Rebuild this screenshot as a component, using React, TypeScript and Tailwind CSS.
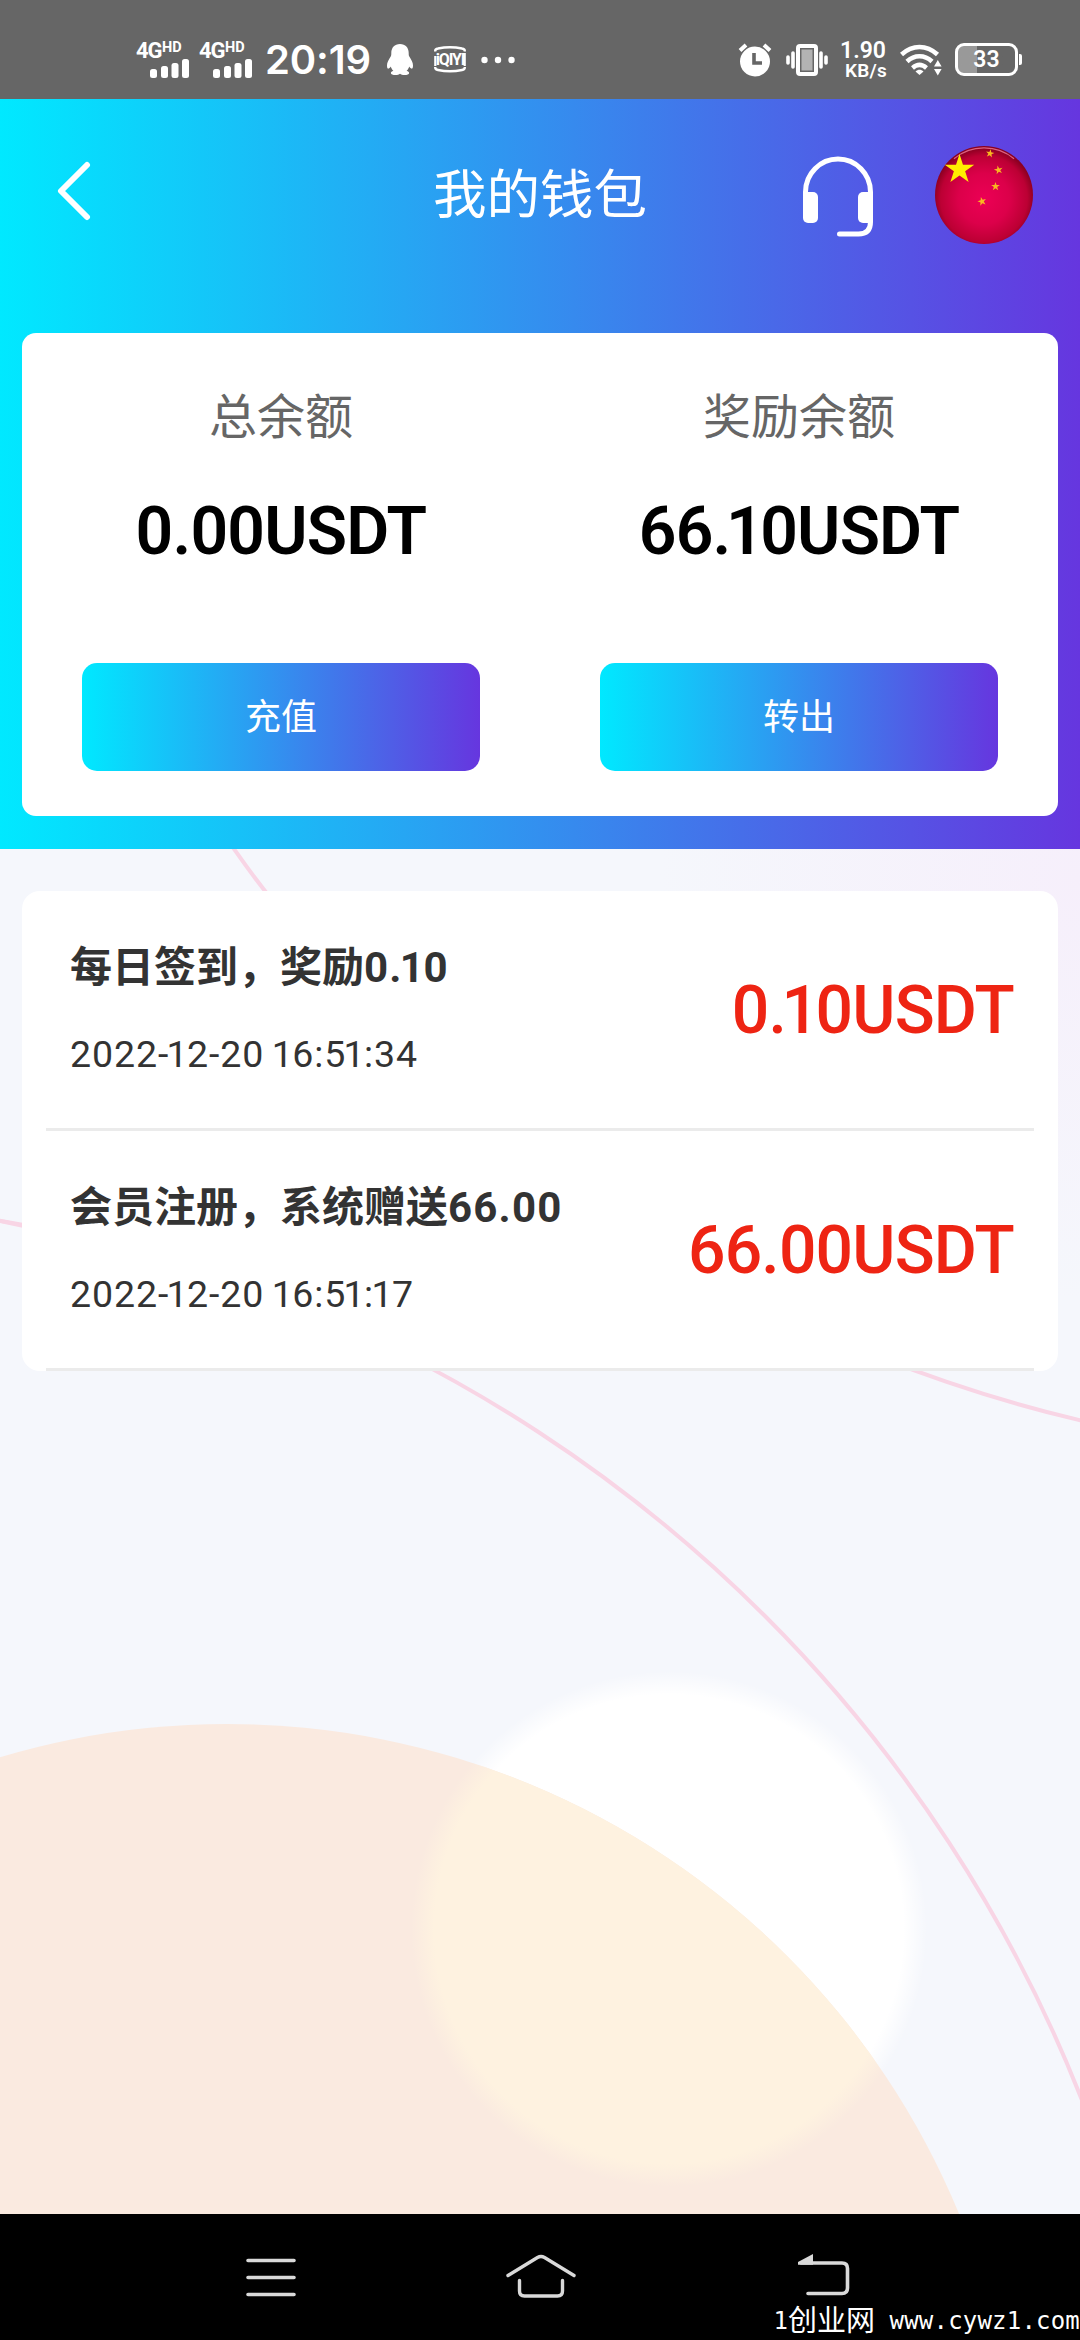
import React from "react";

function Backdrop() {
  return (
    <svg className="absolute inset-0 h-full w-full" viewBox="0 0 1080 1365" fill="none">
      <defs>
        <radialGradient id="glow" cx="1080" cy="30" r="420" gradientUnits="userSpaceOnUse">
          <stop offset="0" stopColor="#f6effb" />
          <stop offset="1" stopColor="#f5f7fc" />
        </radialGradient>
        <radialGradient id="moon" cx="669" cy="1080" r="258" gradientUnits="userSpaceOnUse">
          <stop offset="0.91" stopColor="#ffffff" />
          <stop offset="1" stopColor="#ffffff" stopOpacity="0" />
        </radialGradient>
        <radialGradient id="cream" cx="669" cy="1080" r="258" gradientUnits="userSpaceOnUse">
          <stop offset="0.91" stopColor="#fef2e0" />
          <stop offset="1" stopColor="#fef2e0" stopOpacity="0" />
        </radialGradient>
        <clipPath id="hill">
          <circle cx="227" cy="1667" r="792" />
        </clipPath>
      </defs>
      <rect width="1080" height="1365" fill="url(#glow)" />
      <g stroke="#f8d5e5" strokeWidth="4">
        <circle cx="1408" cy="-827" r="1436" />
        <circle cx="-237" cy="1769" r="1417" />
        <path d="M0 372 L24 377" />
      </g>
      <circle cx="669" cy="1080" r="258" fill="url(#moon)" />
      <circle cx="227" cy="1667" r="792" fill="#faeae0" />
      <circle cx="669" cy="1080" r="258" fill="url(#cream)" clipPath="url(#hill)" />
    </svg>
  );
}

/* Sets numerals proportionally: the figure 1 takes less room than the others. */
function Figures({ text }: { text: string }) {
  return (
    <>
      {text.split(/(1)/).map((part, i) =>
        part === "1" ? (
          <span key={i} className="-mr-[0.04em] -ml-[0.07em]">
            1
          </span>
        ) : (
          part
        ),
      )}
    </>
  );
}

function Signal() {
  return (
    <div className="h-[36px] w-[63px] shrink-0">
      <div className="flex h-[17px] items-start leading-none">
        <span className="w-[26px] text-[22px] leading-[18px] font-bold tracking-[-1px]">4G</span>
        <span className="text-[14.500px] leading-[12px] font-bold">HD</span>
      </div>
      <svg className="ml-[14px]" width="40" height="19" viewBox="0 0 40 19" fill="#fff">
        <rect x="0" y="10" width="7" height="9" rx="2.5" />
        <rect x="11" y="7" width="7" height="12" rx="2.5" />
        <rect x="21.500" y="4" width="7" height="15" rx="2.5" />
        <rect x="32" y="0" width="7" height="19" rx="2.5" />
      </svg>
    </div>
  );
}

function StatusBar() {
  return (
    <div className="flex h-[99px] items-center bg-[#666] pt-[20px] pl-[136px] font-['Roboto',sans-serif] text-white">
      <Signal />
      <Signal />
      <span className="ml-[3px] w-[122px] font-['Inter',sans-serif] text-[40px] leading-[40px] font-semibold tracking-[-0.1px]">20:19</span>
      <svg className="shrink-0" width="26" height="31" viewBox="0 0 26 31" fill="#fff">
        <path d="M13 0C7.500 0 4.300 3.800 4.300 9c0 1.500 0 2.500-.6 3.600C1.500 16 0 18.600 0 21.500 0 24 .8 25 1.600 24.600c.8-.3 1.600-1.300 2.200-2.200.4 1.600 1.300 3.200 2.600 4.400-1.600.5-2.500 1.200-2.500 2.200C3.900 30.500 6 31 8.400 31c2 0 3.700-.4 4.600-1.200.9.800 2.600 1.200 4.600 1.200 2.400 0 4.500-.5 4.500-2 0-1-.9-1.700-2.500-2.200 1.300-1.200 2.200-2.800 2.600-4.400.6.900 1.400 1.900 2.200 2.200.8.400 1.600-.6 1.600-3.100 0-2.900-1.500-5.500-3.700-8.900-.6-1.100-.6-2.100-.6-3.600C21.700 3.800 18.500 0 13 0z" />
      </svg>
      <div className="relative ml-[21px] h-[27px] w-[32px] shrink-0">
        <svg className="block" width="32" height="27" viewBox="0 0 32 27" fill="none" stroke="#fff">
          <path d="M1.200 5.500V5C1.200 3.500 2.200 2.800 4 2.500 11 1.100 21 1.100 28 2.500c1.800.3 2.800 1 2.800 2.500v.5M1.200 21v.5c0 1.500 1 2.200 2.800 2.500 7 1.400 17 1.400 24 0 1.800-.3 2.800-1 2.800-2.500V21" strokeWidth="2.400" />
          <path d="M1.300 10v10M30.700 7v13" strokeWidth="2.200" />
        </svg>
        <span className="absolute inset-x-0 top-[6px] text-center text-[16px] leading-[16px] font-bold tracking-[-1.2px]">iQIYI</span>
      </div>
      <svg className="ml-[15px] shrink-0" width="34" height="8" viewBox="0 0 34 8" fill="#fff">
        <circle cx="3.500" cy="4" r="3.200" />
        <circle cx="17" cy="4" r="3.200" />
        <circle cx="30.500" cy="4" r="3.200" />
      </svg>

      <svg className="ml-[223px] shrink-0" width="34" height="34" viewBox="0 0 34 34" fill="none">
        <circle cx="17" cy="18.500" r="15" fill="#fff" />
        <path d="M2 7.500 8 2M32 7.500 26 2" stroke="#fff" strokeWidth="4" />
        <path d="M16 10v10h8" stroke="#666" strokeWidth="3.600" />
      </svg>
      <svg className="ml-[14px] shrink-0" width="42" height="32" viewBox="0 0 42 32" fill="none" stroke="#fff">
        <rect x="12" y="2" width="18" height="28" rx="2" strokeWidth="4" />
        <rect x="15.500" y="5.500" width="11" height="21" fill="#b3b3b3" stroke="none" />
        <path d="M7 9v14M35 9v14" strokeWidth="3.600" strokeLinecap="round" />
        <path d="M2 13v6M40 13v6" strokeWidth="3.600" strokeLinecap="round" />
      </svg>
      <div className="ml-[12px] flex w-[51px] shrink-0 flex-col pt-[2px] font-semibold">
        <span className="text-[23px] leading-[20px]">1.90</span>
        <span className="pl-[5px] text-[19px] leading-[19px] tracking-[0.2px]">KB/s</span>
      </div>
      <svg className="ml-[9px] shrink-0" width="43" height="32" viewBox="0 0 43 32" fill="none" stroke="#fff">
        <path d="M1.500 10.500c11-10 25-10 36 0" strokeWidth="4.600" />
        <path d="M7 17.500c7.500-7 17.500-7 25 0" strokeWidth="4.600" />
        <path d="M12.500 24c4.500-4 9.500-4 14 0" strokeWidth="4.400" />
        <path d="M15.500 27.500c2.500-2.200 5.500-2.200 8 0L19.500 31z" fill="#fff" stroke="none" />
        <path d="M34 22.500 37.800 16l3.800 6.500zM34 25l3.800 6.500 3.800-6.500z" fill="#fff" stroke="none" />
      </svg>
      <div className="ml-[12px] flex shrink-0 items-center">
        <div className="flex h-[33px] w-[63px] items-center justify-center rounded-[9px] border-[3px] border-white bg-linear-to-r from-[#999] from-34% to-[#666] to-34%">
          <span className="text-[23px] leading-none font-semibold">33</span>
        </div>
        <div className="ml-[1px] h-[11px] w-[3px] rounded-r-[2px] bg-white" />
      </div>
    </div>
  );
}

const STAR = "M0 -1 L.2245 -.309 L.951 -.309 L.363 .118 L.588 .809 L0 .382 L-.588 .809 L-.363 .118 L-.951 -.309 L-.2245 -.309Z";

function FlagBall() {
  return (
    <svg className="shrink-0" width="100" height="100" viewBox="0 0 100 100">
      <defs>
        <radialGradient id="ball" cx="0.5" cy="0.54" r="0.52">
          <stop offset="0" stopColor="#ec0055" />
          <stop offset="0.5" stopColor="#dc004a" />
          <stop offset="0.85" stopColor="#bc0034" />
          <stop offset="1" stopColor="#8a0020" />
        </radialGradient>
      </defs>
      <circle cx="50" cy="50" r="49" fill="url(#ball)" />
      <path d="M20 13.700A47 47 0 0 1 80 13.700" stroke="#f07a98" strokeWidth="1.200" fill="none" opacity="0.8" />
      <path d={STAR} fill="#ffee00" transform="translate(25.500 24.500) scale(15.500)" />
      <g fill="#f8b820">
        <path d={STAR} transform="translate(56 8.500) rotate(10) scale(4.400)" />
        <path d={STAR} transform="translate(64.500 25) rotate(-12) scale(4.600)" />
        <path d={STAR} transform="translate(61.500 41.500) scale(4.600)" />
        <path d={STAR} transform="translate(48 56.500) rotate(-14) scale(4.600)" />
      </g>
    </svg>
  );
}

function TitleBar() {
  return (
    <div className="grid h-[192px] grid-cols-[1fr_auto_1fr] items-center">
      <svg className="mb-[8px] ml-[56px]" width="36" height="60" viewBox="0 0 36 60" fill="none" stroke="#fff" strokeWidth="6" strokeLinecap="round" strokeLinejoin="round">
        <path d="M31 4 5 30 31 56" />
      </svg>
      <h1 className="text-[53.500px] leading-none font-normal text-white">我的钱包</h1>
      <div className="flex items-center justify-end pr-[46px]">
        <svg className="mt-[4px] mr-[60px] shrink-0" width="72" height="82" viewBox="0 0 72 82" fill="none">
          <path d="M3.500 40V36a32.500 33 0 0 1 65 0V66q0 12-12 12H37.500" stroke="#fff" strokeWidth="5" strokeLinecap="round" />
          <rect x="1" y="36" width="15" height="31" rx="5" fill="#fff" />
          <rect x="56" y="36" width="15" height="31" rx="5" fill="#fff" />
        </svg>
        <FlagBall />
      </div>
    </div>
  );
}

function Balance({ label, amount, action }: { label: string; amount: string; action: string }) {
  return (
    <div className="flex flex-1 flex-col items-center pt-[54px]">
      <div className="text-[48px] leading-[60px] text-[#666]">{label}</div>
      <div className="mt-[51px] font-['Roboto',sans-serif] text-[66px] leading-[68px] font-semibold tracking-[-0.8px] text-black">
        <Figures text={amount} />
      </div>
      <button className="mt-[97px] h-[108px] w-[398px] rounded-[15px] bg-linear-to-r/srgb from-[#00e9ff] to-[#6636df] text-[36px] leading-none text-white">
        {action}
      </button>
    </div>
  );
}

function Entry({ title, value, time, amount }: { title: string; value: string; time: string; amount: string }) {
  return (
    <div className="flex h-[240px] items-center justify-between border-b-[3px] border-[#ebebeb] pr-[20px] pl-[24px] font-['Roboto','Noto_Sans_CJK_SC',sans-serif]">
      <div className="flex flex-col text-[#333]">
        <div className="text-[42px] leading-[56px] font-bold">
          {title}
          <span className="tracking-[1.2px]">
            <Figures text={value} />
          </span>
        </div>
        <div className="mt-[32px] text-[37.500px] leading-[52px] tracking-[0.9px]">
          <Figures text={time} />
        </div>
      </div>
      <div className="pt-[2px] text-[66px] leading-none font-medium tracking-[-0.8px] text-[#ee2413]">
        <Figures text={amount} />
      </div>
    </div>
  );
}

function NavBar() {
  return (
    <div className="flex h-[126px] flex-col bg-black">
      <div className="flex h-[88px] items-end pb-[3px] pl-[246px]">
        <svg width="50" height="44" viewBox="0 0 50 44" stroke="#d9d9d9" strokeWidth="3.600" strokeLinecap="round">
          <path d="M2 5.500H48M2 22.500H48M2 39.500H48" />
        </svg>
        <svg className="ml-[210px]" width="70" height="46" viewBox="0 0 70 46" fill="none" stroke="#d9d9d9" strokeWidth="3.400" strokeLinecap="round" strokeLinejoin="round">
          <path d="M2 22.500 31.500 4.500Q35 2.500 38.500 4.500L68 22.500" />
          <path d="M13.500 27.500V38q0 5 5 5H51.500q5 0 5-5V27.500" />
        </svg>
        <svg className="ml-[222px]" width="52" height="46" viewBox="0 0 52 46" fill="none" stroke="#d9d9d9" strokeWidth="3.600" strokeLinecap="round">
          <path d="M3 10H44q5.500 0 5.500 5.500V35q0 5.500-5.500 5.500H10" />
          <path d="M0 11.800V9L15 1V11.800z" fill="#d9d9d9" stroke="none" />
        </svg>
      </div>
      <div className="flex h-[38px] items-center justify-end whitespace-pre text-white">
        <span className="font-['DejaVu_Sans_Mono',monospace] text-[24px] leading-[34px]">1</span>
        <span className="text-[29px] leading-[34px]">创业网</span>
        <span className="font-['DejaVu_Sans_Mono',monospace] text-[24px] leading-[34px] tracking-[0.2px]"> www.cywz1.com</span>
      </div>
    </div>
  );
}

export default function App() {
  return (
    <div className="flex h-[2340px] w-[1080px] flex-col overflow-hidden font-['Inter','Noto_Sans_CJK_SC',sans-serif]">
      <StatusBar />
      <header className="h-[750px] bg-linear-to-r/srgb from-[#00e9ff] to-[#6636df] px-0">
        <TitleBar />
        <section className="mx-[22px] mt-[42px] flex h-[483px] rounded-[14px] bg-white">
          <Balance label="总余额" amount="0.00USDT" action="充值" />
          <Balance label="奖励余额" amount="66.10USDT" action="转出" />
        </section>
      </header>
      <main className="relative h-[1365px] px-[22px] pt-[42px]">
        <Backdrop />
        <section className="relative rounded-[18px] bg-white px-[24px]">
          <Entry title="每日签到，奖励" value="0.10" time="2022-12-20 16:51:34" amount="0.10USDT" />
          <Entry title="会员注册，系统赠送" value="66.00" time="2022-12-20 16:51:17" amount="66.00USDT" />
        </section>
      </main>
      <NavBar />
    </div>
  );
}
